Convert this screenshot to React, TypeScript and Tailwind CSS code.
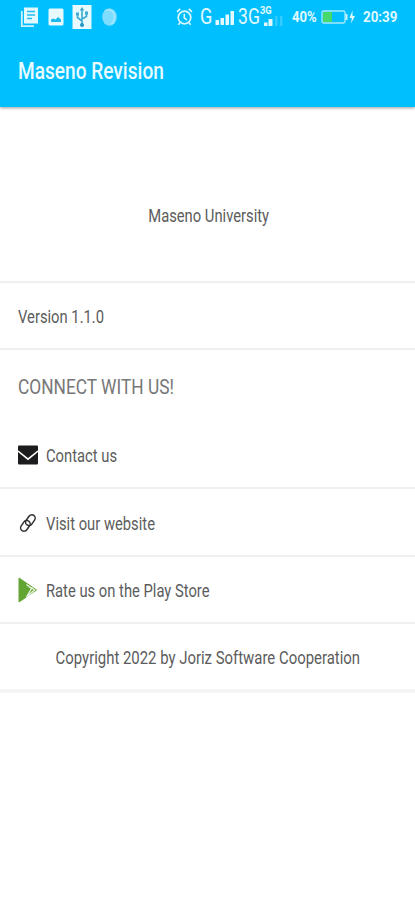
import { ReactNode } from 'react';
import clsx from 'clsx';

interface RowProps {
  icon?: ReactNode;
  label: string;
  className?: string;
}

const AlarmIcon = () => (
  <svg className="h-[20px] w-[17px]" viewBox="0 0 17 20" fill="none" stroke="#dff8ff">
    <circle cx="8.5" cy="10.5" r="6.300" strokeWidth="1.7" />
    <path d="M8.3 6.8v4.2l2.6 1.9M1 4.8l3.2-3M16 4.8l-3.2-3M4 15.7l-1.6 2M13 15.7l1.6 2" strokeWidth="1.6" />
  </svg>
);

const StatusBar = () => (
  <div className="flex h-[34px] items-center pl-[20px] text-[#e2f9ff]">
    <svg className="h-[22px] w-[19px] shrink-0" viewBox="0 0 19 22">
      <path d="M1.8 5v15.2H14" fill="none" stroke="#c9f2ff" strokeWidth="1.8" />
      <path d="M4 1.5h14v16H4z" fill="#e2f9ff" />
      <path d="M7 5.5h8M7 9h8M7 12.5h5" stroke="#27bdf0" strokeWidth="1.4" />
    </svg>
    <svg className="ml-[9px] h-[18px] w-[16px] shrink-0" viewBox="0 0 16 18">
      <rect x="0.5" y="0.5" width="15" height="17" rx="1.5" fill="#e6faff" />
      <path d="M3 14v-2.500l2.500-1 2 1 2.500-2.500L13 11.500V14z" fill="#1bb9ee" />
    </svg>
    <svg className="ml-[8px] h-[24px] w-[20px] shrink-0" viewBox="0 0 20 24">
      <path d="M0.5 0h19v24H0.5z" fill="#e6faff" />
      <path
        d="M10 4v16M5.5 9v3.5L10 16M14.5 8v3.5L10 14"
        fill="none"
        stroke="#3fa9d0"
        strokeWidth="1.6"
      />
      <path d="M10 2l2.3 3.5H7.7zM4 7.5h3v3H4zM13 6.5h3v3h-3z" fill="#3fa9d0" />
      <circle cx="10" cy="20" r="2" fill="#2495c2" />
    </svg>
    <svg className="ml-[9px] h-[20px] w-[17px] shrink-0" viewBox="0 0 17 20">
      <ellipse cx="8.5" cy="10" rx="7.3" ry="8.8" fill="#7edcff" />
      <path d="M4 4c4-3 9 0 9.500 5s-1 6-3 8" fill="none" stroke="#a5e7ff" strokeWidth="1.5" />
    </svg>

    <div className="ml-[58px] flex shrink-0">
      <AlarmIcon />
    </div>
    <span className="ml-[7px] w-[15px] origin-left scale-x-[0.82] text-[22px] leading-none">G</span>
    <svg className="h-[15px] w-[20px] shrink-0" viewBox="0 0 20 15">
      <path d="M0.500 10h3.500v5h-3.500zM5.500 8h3.500v7h-3.500zM10.500 4.500h3.500V15h-3.500zM15.500 1h3.500v14h-3.500z" fill="#e2f9ff" />
    </svg>
    <span className="ml-[3px] w-[22px] origin-left scale-x-[0.8] text-[22px] leading-none">3G</span>
    <div className="-mt-[2px] flex h-[20px] w-[23px] shrink-0 flex-col">
      <span className="origin-left scale-x-[0.85] text-[11px] leading-[10px] font-bold">3G</span>
      <svg className="h-[10px] w-[23px]" viewBox="0 0 23 10">
        <path d="M4 6.500h3.500V10H4zM8.500 3h4v7h-4z" fill="#e2f9ff" />
        <path d="M15 0h2.500v10H15zM20 0h2.500v10H20z" fill="#33caff" />
      </svg>
    </div>
    <span className="mt-[2px] ml-[9px] w-[28px] origin-left scale-x-[0.9] text-[14.500px] font-bold">40%</span>
    <svg className="h-[16px] w-[36px] shrink-0" viewBox="0 0 36 16">
      <rect x="2" y="2" width="23" height="12" rx="1.500" fill="none" stroke="#a6eaff" strokeWidth="1.300" />
      <path d="M25.500 5h2v6h-2z" fill="#c9f2ff" />
      <path d="M3 3h9v10H3z" fill="#46d86b" />
      <path d="M32.500 1.500L29.500 9h2.300l-.8 5.500L35 7h-2.500z" fill="#e2f9ff" />
    </svg>
    <span className="ml-[7px] origin-left scale-x-[0.89] text-[15px] font-bold">20:39</span>
  </div>
);

const MailIcon = () => (
  <svg className="mb-[2px] h-[20px] w-[20px]" viewBox="0 0 20 20">
    <rect x="0" y="0.500" width="20" height="19" rx="1" fill="#1c1c1e" />
    <path d="M0 6l10 8.200L20 6" fill="none" stroke="#fff" strokeWidth="1.500" />
  </svg>
);

const LinkIcon = () => (
  <svg className="mb-[1px] h-[20px] w-[20px]" viewBox="0 0 20 20" fill="none" stroke="#303030" strokeWidth="1.500">
    <rect x="-3.400" y="-5.800" width="6.800" height="11.600" rx="3.400" transform="translate(12.400 7.200) rotate(35)" />
    <rect x="-3.400" y="-5.800" width="6.800" height="11.600" rx="3.400" transform="translate(7.400 12.800) rotate(35)" />
  </svg>
);

const PlayIcon = () => (
  <svg className="mb-[2px] h-[26px] w-[20px]" viewBox="0 0 20 26">
    <path d="M1 1L18.500 13 1 25z" fill="#62a532" stroke="#62a532" strokeLinejoin="round" />
    <path d="M8.500 7.500l5 4L8.500 20l8-7-3.500-2.800" fill="none" stroke="#e8f4df" strokeWidth="1.400" />
  </svg>
);

const Row = ({ icon, label, className }: RowProps) => (
  <div className={clsx('flex items-center border-b-2 border-[#f0f0f0] pt-[2px] pl-[18px]', className)}>
    {icon && <div className="mr-[8px] flex w-[20px] shrink-0 justify-center">{icon}</div>}
    <span className="origin-left scale-x-[0.82] whitespace-nowrap">{label}</span>
  </div>
);

export default function App() {
  return (
    <main className="h-[900px] w-[415px] overflow-hidden bg-white font-['Roboto',sans-serif] text-[18px] text-[#5c5c5c]">
      <header className="h-[107px] bg-[#00bfff] shadow-[0_1px_3px_rgba(0,0,0,0.4)]">
        <StatusBar />
        <h1 className="flex h-[73px] items-center pt-[4px] pl-[18px] text-[23px] font-medium text-[#e9fbff]">
          <span className="origin-left scale-x-[0.83] whitespace-nowrap">Maseno Revision</span>
        </h1>
      </header>

      <section className="flex h-[176px] items-center justify-center border-b-2 border-[#f0f0f0] pt-[42px] pl-[2px]">
        <span className="scale-x-[0.82] whitespace-nowrap">Maseno University</span>
      </section>
      <Row className="h-[67px]" label="Version 1.1.0" />
      <h2 className="flex h-[72px] items-center pt-[4px] pl-[18px] text-[21px] text-[#777]">
        <span className="origin-left scale-x-[0.825] whitespace-nowrap">CONNECT WITH US!</span>
      </h2>
      <Row className="h-[67px]" icon={<MailIcon />} label="Contact us" />
      <Row className="h-[68px]" icon={<LinkIcon />} label="Visit our website" />
      <Row className="h-[67px]" icon={<PlayIcon />} label="Rate us on the Play Store" />
      <footer className="flex h-[69px] items-center justify-center border-b-4 border-[#f4f4f4] pt-[2px]">
        <span className="scale-x-[0.828] whitespace-nowrap">Copyright 2022 by Joriz Software Cooperation</span>
      </footer>
    </main>
  );
}
